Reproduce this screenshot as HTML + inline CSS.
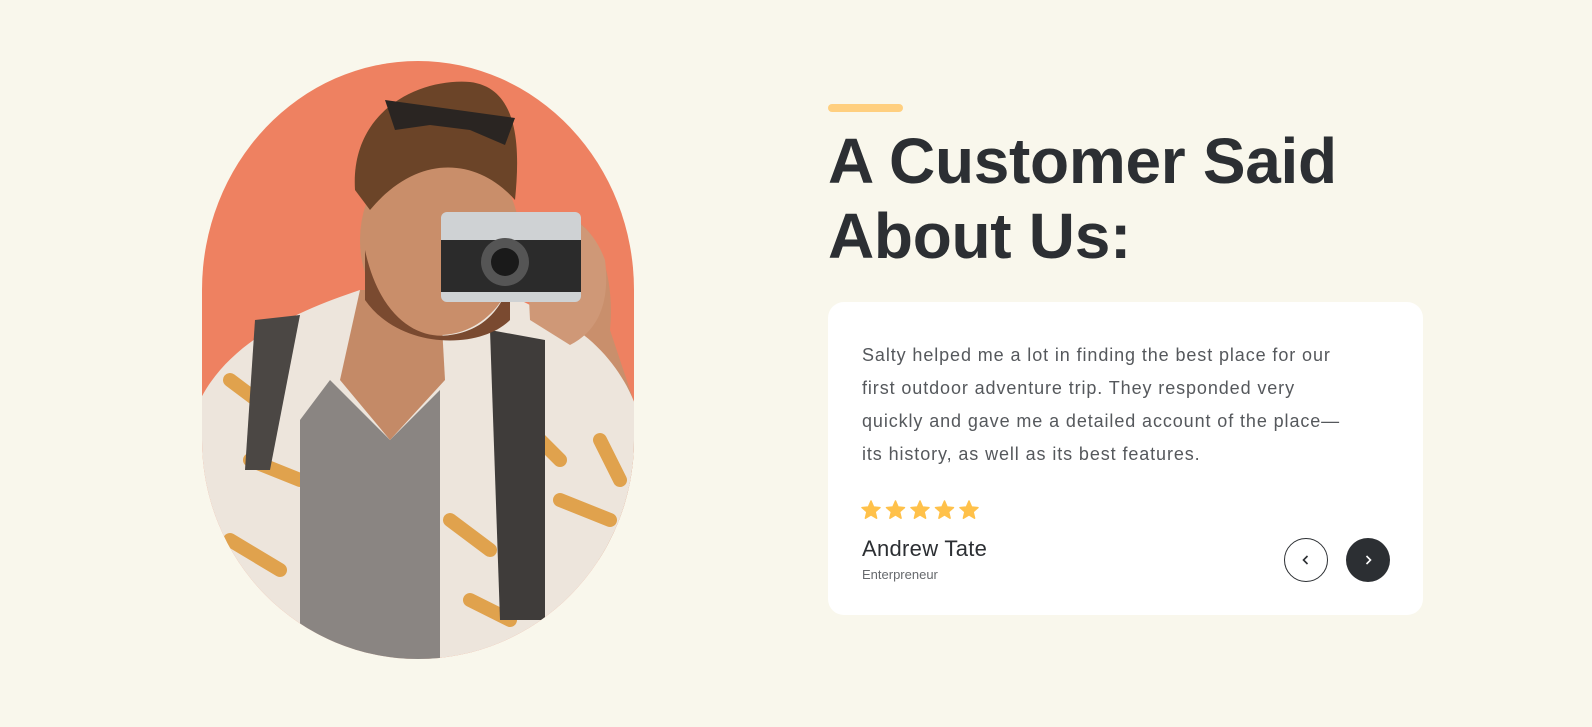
<!DOCTYPE html>
<html><head><meta charset="utf-8"><style>
*{margin:0;padding:0;box-sizing:border-box}
body{width:1592px;height:727px;background:#f9f7ec;font-family:"Liberation Sans",sans-serif;position:relative;overflow:hidden}
.bar{position:absolute;left:828px;top:104px;width:75px;height:8px;border-radius:4px;background:#ffcf7f}
h1{position:absolute;left:828px;top:124px;font-size:64px;line-height:75px;font-weight:700;color:#2c2f33;letter-spacing:-0.3px}
.card{position:absolute;left:828px;top:302px;width:595px;height:313px;background:#fff;border-radius:16px}
.q{position:absolute;left:34px;top:37px;white-space:nowrap;font-size:18px;line-height:33px;color:#55585c;letter-spacing:.9px}
.stars{position:absolute;left:33px;top:198px}
.name{position:absolute;left:34px;top:234px;font-size:22px;color:#2c2f33;letter-spacing:.3px}
.role{position:absolute;left:34px;top:265px;font-size:13px;color:#66696d}
.btn{position:absolute;top:236px;width:44px;height:44px;border-radius:50%;display:flex;align-items:center;justify-content:center}
</style></head><body>
<svg style="position:absolute;left:0;top:0" width="700" height="727">
<defs><clipPath id="c"><path d="M202,290 A216,229 0 0 1 634,290 L634,440 A216,219 0 0 1 202,440 Z"/></clipPath></defs>
<g clip-path="url(#c)">
<rect x="200" y="55" width="440" height="610" fill="#ee8161"/>
<path d="M560,215 C600,220 615,280 610,330 L640,420 L640,560 L590,560 L560,380 Z" fill="#c98f6c"/>
<path d="M200,400 C230,340 300,310 360,290 L440,300 L520,300 L560,320 C600,340 630,380 640,420 L640,665 L200,665 Z" fill="#ede5dc"/>
<path d="M230,380 l40,30 M250,460 l50,20 M520,420 l40,40 M560,500 l50,20 M450,520 l40,30 M230,540 l50,30 M470,600 l40,20 M600,440 l20,40" stroke="#e0a24d" stroke-width="14" stroke-linecap="round"/>
<path d="M330,380 L390,440 L440,390 L440,665 L300,665 L300,420 Z" fill="#8a8582"/>
<path d="M360,290 L440,290 L445,380 L390,440 L340,380 Z" fill="#c48a67"/>
<path d="M255,320 L300,315 L270,470 L245,470 Z" fill="#4b4744"/>
<path d="M490,330 L545,340 L545,620 L500,620 Z" fill="#3f3c3a"/>
<ellipse cx="440" cy="240" rx="80" ry="95" fill="#c98e6a"/>
<path d="M365,250 C380,320 420,340 450,335 C490,330 505,300 510,280 L510,320 C480,350 400,350 365,300 Z" fill="#7a4a30"/>
<path d="M355,190 C350,110 420,78 470,82 C520,88 520,150 515,200 C480,160 420,150 370,210 Z" fill="#6b4428"/>
<path d="M385,100 L515,118 L505,145 L470,130 L430,125 L395,130 Z" fill="#2a2522"/>
<path d="M525,215 C560,205 590,220 605,260 C610,300 600,330 570,345 L530,320 Z" fill="#cf9877"/>
<rect x="441" y="212" width="140" height="90" rx="6" fill="#cfd2d4"/>
<rect x="441" y="240" width="140" height="52" fill="#2b2b2b"/>
<circle cx="505" cy="262" r="24" fill="#555"/><circle cx="505" cy="262" r="14" fill="#1a1a1a"/>
</g>
</svg>
<div class="bar"></div>
<h1>A Customer Said<br>About Us:</h1>
<div class="card">
<div class="q">Salty helped me a lot in finding the best place for our<br>first outdoor adventure trip. They responded very<br>quickly and gave me a detailed account of the place—<br>its history, as well as its best features.</div>
<svg class="stars" width="122" height="22" viewBox="0 0 122 22">
<defs><path id="s" d="M10,1 L12.6,7 L19,7.6 L14.1,11.8 L15.6,18.2 L10,14.8 L4.4,18.2 L5.9,11.8 L1,7.6 L7.4,7 Z" fill="#ffc14a" stroke="#ffc14a" stroke-width="1.5" stroke-linejoin="round"/></defs>
<use href="#s" x="0"/><use href="#s" x="24.5"/><use href="#s" x="49"/><use href="#s" x="73.5"/><use href="#s" x="98"/>
</svg>
<div class="name">Andrew Tate</div>
<div class="role">Enterpreneur</div>
<div class="btn" style="left:456px;border:1px solid #2c2f33"><svg width="12" height="12" viewBox="0 0 12 12"><path d="M7.5,2 L3.5,6 L7.5,10" fill="none" stroke="#2c2f33" stroke-width="1.6"/></svg></div>
<div class="btn" style="left:518px;background:#2c2f33"><svg width="12" height="12" viewBox="0 0 12 12"><path d="M4.5,2 L8.5,6 L4.5,10" fill="none" stroke="#fff" stroke-width="1.6"/></svg></div>
</div>
</body></html>
